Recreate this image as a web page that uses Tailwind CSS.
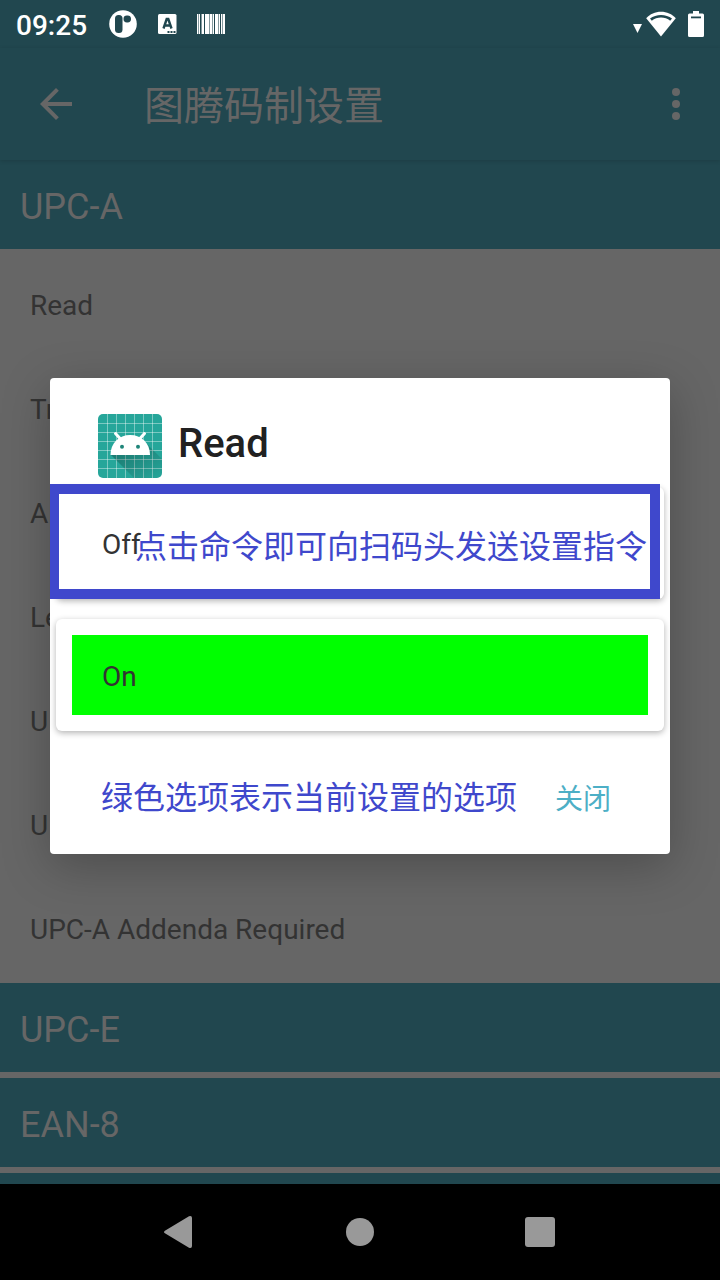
<!DOCTYPE html>
<html lang="zh-CN">
<head>
<meta charset="utf-8">
<meta name="viewport" content="width=device-width, initial-scale=1">
<title>图腾码制设置</title>
<script src="https://cdn.jsdelivr.net/npm/@tailwindcss/browser@4"></script>
</head>
<body class="bg-black font-['Roboto','Noto_Sans_CJK_SC',sans-serif]">
<div class="relative flex h-screen flex-col overflow-hidden">

  <!-- Status bar -->
  <div class="flex h-12 shrink-0 items-center bg-[#21474f] px-4 text-white">
    <span class="text-[28px] leading-8 font-medium mt-1">09:25</span>
    <svg class="ml-[22px] size-7" viewBox="0 0 28 28" aria-hidden="true">
      <circle cx="14" cy="14" r="13.8" fill="#fff"/>
      <rect x="6" y="5" width="7.500" height="18" rx="3.500" fill="#21474f"/>
      <rect x="14.500" y="5.500" width="7.500" height="7" rx="3.400" fill="#21474f"/>
    </svg>
    <svg class="ml-[21px] h-5 w-[19px]" viewBox="0 0 19 20" aria-hidden="true">
      <rect width="18.500" height="20" rx="1.500" fill="#fff"/>
      <path d="M5.500 14.500 8.700 5h1.600l3.200 9.500M6.800 11.500h5.400" fill="none" stroke="#21474f" stroke-width="2.400"/>
      <path d="M9.500 18h2m1 0h2m1 0h2" stroke="#21474f" stroke-width="1.800"/>
    </svg>
    <svg class="ml-5 h-5 w-7" viewBox="0 0 28 20" aria-hidden="true" fill="#fff">
      <path d="M0 0h1v20H0zM2 0h1v20H2zM5 0h2v20H5zM8 0h4v20H8zM13 0h2v20h-2zM16 0h1v20h-1zM18 0h3v20h-3zM22 0h1v20h-1zM24 0h1v20h-1zM26 0h2v20h-2z"/>
      <path d="M1 0h1v20H1zM4 0h1v20H4zM12 0h1v20h-1zM15 0h1v20h-1zM21 0h1v20h-1zM25 0h1v20h-1z" opacity=".45"/>
    </svg>
    <svg class="ml-auto mt-2 h-[9px] w-[9px]" viewBox="0 0 9 9" aria-hidden="true"><path d="M0 0h9L4.500 9z" fill="#fff"/></svg>
    <svg class="ml-1 h-[26px] w-[30px]" viewBox="0 0 30 26" aria-hidden="true">
      <path d="M15 .8C9.200.8 4 3.200.2 7.200L15 25.500 29.800 7.200C26 3.200 20.800.8 15 .8z" fill="#fff"/>
      <path d="M4 7.600C10 2.800 20 2.800 26 7.600l-1.800 2.200C19 5.400 11 5.400 5.800 9.800z" fill="#21474f"/>
    </svg>
    <svg class="ml-3 h-[26px] w-4" viewBox="0 0 16 26" aria-hidden="true">
      <path d="M5 0h6v2.500h3.500q1.500 0 1.500 1.500v20.500q0 1.500-1.500 1.500h-13Q0 26 0 24.500V4q0-1.500 1.500-1.500H5z" fill="#fff"/>
      <path d="M3 5.500h10v1.800H3z" fill="#21474f"/>
    </svg>
  </div>

  <!-- App bar -->
  <header class="relative flex h-28 shrink-0 items-center bg-[#21474f] pr-7 pl-8 text-[#666] shadow-[0_1px_4px_rgba(0,0,0,0.15)]">
    <button type="button" aria-label="返回" class="size-12">
      <svg class="size-12" viewBox="0 0 24 24" fill="currentColor" aria-hidden="true"><path d="M20 11H7.830l5.590-5.590L12 4l-8 8 8 8 1.410-1.410L7.830 13H20v-2z"/></svg>
    </button>
    <h1 class="ml-16 pt-[6px] text-[40px] leading-[60px]">图腾码制设置</h1>
    <button type="button" aria-label="更多选项" class="ml-auto flex h-12 w-8 items-center justify-center">
      <svg class="h-8 w-2" viewBox="0 0 8 32" fill="currentColor" aria-hidden="true"><circle cx="4" cy="4" r="4"/><circle cx="4" cy="16" r="4"/><circle cx="4" cy="28" r="4"/></svg>
    </button>
  </header>

  <!-- Symbology list -->
  <main class="flex min-h-0 flex-1 flex-col overflow-hidden bg-[#666] text-[28px] text-[#333]">
    <h2 class="shrink-0 bg-[#21474f] px-5 pt-[5px] text-[36px] leading-[84px] text-[#666]">UPC-A</h2>
    <ul class="shrink-0 px-[30px] pt-[5px] pb-px leading-[104px]">
      <li>Read</li>
      <li>Tr</li>
      <li>A</li>
      <li>Le</li>
      <li>U</li>
      <li>U</li>
      <li>UPC-A Addenda Required</li>
    </ul>
    <h2 class="mb-[6px] shrink-0 bg-[#21474f] px-5 pt-[5px] text-[36px] leading-[84px] text-[#666]">UPC-E</h2>
    <h2 class="mb-[6px] shrink-0 bg-[#21474f] px-5 pt-[5px] text-[36px] leading-[84px] text-[#666]">EAN-8</h2>
    <div class="flex-1 bg-[#21474f]"></div>
  </main>

  <!-- Navigation bar -->
  <nav class="flex h-24 shrink-0 items-center justify-center bg-black text-[#999]">
    <button type="button" aria-label="后退" class="flex w-1/4 justify-center">
      <svg class="mr-1 h-8 w-7" viewBox="0 0 28 32" fill="currentColor" aria-hidden="true"><path d="M25 .3.900 14.700q-1.800 1.300 0 2.600L25 31.700q3 1 3-1.700V2q0-2.700-3-1.700z"/></svg>
    </button>
    <button type="button" aria-label="主屏幕" class="flex w-1/4 justify-center"><span class="size-7 rounded-full bg-[#999]"></span></button>
    <button type="button" aria-label="最近任务" class="flex w-1/4 justify-center"><span class="size-[30px] rounded-[3px] bg-[#999]"></span></button>
  </nav>

  <!-- Dialog -->
  <div class="absolute inset-x-0 top-12 bottom-24 flex items-center px-[50px]">
    <section role="dialog" aria-labelledby="dialog-title" class="w-full rounded bg-white px-[6px] pt-9 pb-5 shadow-[0_12px_48px_rgba(0,0,0,0.25)]">
      <div class="flex items-center gap-4 px-[42px]">
        <svg class="size-16" viewBox="0 0 64 64" aria-hidden="true">
          <defs>
            <linearGradient id="cast" x1="0" y1="0" x2="1" y2="1"><stop offset="0" stop-color="#000" stop-opacity=".32"/><stop offset="1" stop-color="#000" stop-opacity="0"/></linearGradient>
            <clipPath id="tile"><rect width="64" height="64" rx="5"/></clipPath>
          </defs>
          <g clip-path="url(#tile)">
            <rect width="64" height="64" fill="#26a69a"/>
            <path d="M9.500 0v64M18.500 0v64M27.500 0v64M36.500 0v64M45.500 0v64M54.500 0v64M0 9.500h64M0 18.500h64M0 27.500h64M0 36.500h64M0 45.500h64M0 54.500h64" stroke="#fff" stroke-opacity=".4"/>
            <path d="M13 41 36 64h28V45L49 30l3 11z" fill="url(#cast)"/>
          </g>
          <path d="M12.500 41C12.500 29 21 21 32.200 21S52 29 52 41z" fill="#fff"/>
          <path d="m17.500 19.500 5 5.500M46.500 19.500l-5 5.500" stroke="#fff" stroke-width="3" stroke-linecap="round"/>
          <circle cx="24" cy="32.700" r="2" fill="#1f8579"/><circle cx="40" cy="32.700" r="2" fill="#1f8579"/>
        </svg>
        <h2 id="dialog-title" class="pb-1 text-[40px] leading-[60px] font-medium text-[#212121]">Read</h2>
      </div>

      <div class="relative mt-[9px] text-[28px] text-[#333]">
        <div class="rounded-md bg-white p-4 shadow-[0_2px_6px_rgba(0,0,0,0.3)]">
          <button type="button" class="block h-20 w-full px-[30px] pt-1 text-left">Off</button>
        </div>
        <p class="absolute -top-[3px] right-1 bottom-0 -left-[6px] flex items-center justify-end border-y-[10px] border-r-[10px] border-l-[9px] border-[#3f48cc] pt-[10px] pr-[3px] text-[32px] whitespace-nowrap text-[#3f48cc]">点击命令即可向扫码头发送设置指令</p>
      </div>
      <div class="mt-5 rounded-md bg-white p-4 text-[28px] text-[#333] shadow-[0_2px_6px_rgba(0,0,0,0.3)]">
        <button type="button" class="block h-20 w-full bg-[#00ff00] px-[30px] pt-1 text-left">On</button>
      </div>

      <div class="mt-[31px] flex h-[72px] items-center justify-between pr-[53px] pl-[45px]">
        <p class="text-[32px] leading-[48px] text-[#3f48cc]">绿色选项表示当前设置的选项</p>
        <button type="button" class="pt-1 text-[28px] leading-[48px] text-[#4dafc6]">关闭</button>
      </div>
    </section>
  </div>
</div>
</body>
</html>
